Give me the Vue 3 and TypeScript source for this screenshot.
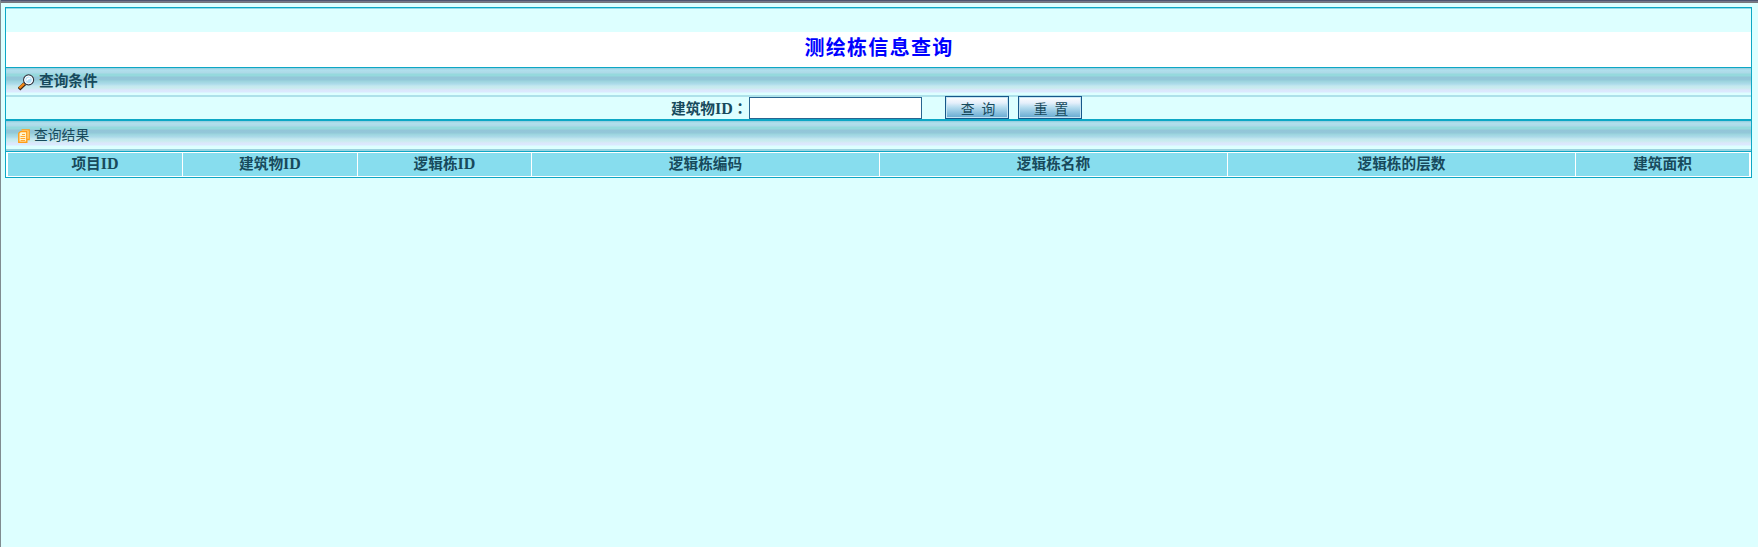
<script setup lang="ts">
import { ref } from 'vue'

interface Column {
  title: string
  suffix?: string
  width: number
}

const buildingId = ref('')
const columns: Column[] = [
  { title: '项目', suffix: 'ID', width: 174 },
  { title: '建筑物', suffix: 'ID', width: 174 },
  { title: '逻辑栋', suffix: 'ID', width: 173 },
  { title: '逻辑栋编码', width: 347 },
  { title: '逻辑栋名称', width: 347 },
  { title: '逻辑栋的层数', width: 347 },
  { title: '建筑面积', width: 173 },
]
const template = columns.map((c) => `${c.width}fr`).join(' ')

function reset(): void {
  buildingId.value = ''
}
</script>

<template>
  <main class="page">
    <div class="topbar"></div>
    <section class="panel">
      <div class="spacer"></div>
      <h1 class="title">测绘栋信息查询</h1>
      <div class="band search-band">
        <svg class="magnifier" width="17" height="17" viewBox="0 0 17 17">
          <path d="M1 15.2 6.8 9.7" stroke="#3b2418" stroke-width="3.8" />
          <path d="M1.3 14.2 6.2 9.6" stroke="#f58a16" stroke-width="2.3" />
          <circle cx="10.6" cy="5.9" r="5" fill="#e8f5ff" stroke="#35363f" stroke-width="1.2" />
          <circle cx="10.6" cy="5.9" r="3.8" fill="#b5e2fa" stroke="#fff" />
          <path d="M8.8 6.8c.2-2 1.5-2.7 3.6-2.5" fill="none" stroke="#fff" stroke-width="1.3" />
        </svg>
        <b>查询条件</b>
      </div>
      <form class="conditions" @submit.prevent>
        <label for="building">建筑物<span class="latin">ID</span><span class="colon">：</span></label>
        <input id="building" v-model="buildingId" type="text" />
        <button class="query" type="submit">查&nbsp; 询</button>
        <button type="button" @click="reset">重&nbsp; 置</button>
      </form>
      <div class="band result-band">
        <svg class="pages" width="12" height="14" viewBox="0 0 12 14">
          <path d="M3.5.8h7.7v9.7H9" fill="#ffe3a4" stroke="#ff9d16" stroke-width="1.3" />
          <path d="M.8 4.2 2.5 2.6h6.3v10.6H.8z" fill="#fff5cf" stroke="#ff9d16" stroke-width="1.4" />
          <path d="M4 5.5h3M2.5 7.5h4.7M2.5 9.5h4.7M2.5 11.5h4.7" stroke="#ffa62e" />
        </svg>
        <span>查询结果</span>
      </div>
      <div class="table-head" :style="{ gridTemplateColumns: template }">
        <div v-for="c in columns" :key="c.title" class="cell">
          {{ c.title }}<span v-if="c.suffix" class="latin">{{ c.suffix }}</span>
        </div>
      </div>
    </section>
  </main>
</template>

<style>
body {
  background: #dff;
}
</style>

<style scoped>
* {
  box-sizing: border-box;
}
.page {
  height: 547px;
  border-left: 1px solid #808c90;
  background: #dff;
  color: #174a5c;
  font: 14.67px/20px "Liberation Serif", "Noto Sans CJK SC", serif;
  overflow: hidden;
}
.topbar {
  height: 3px;
  margin-left: -1px;
  background: linear-gradient(#4d5570 0 1px, #77788a 1px 2px, #77777c 2px);
}
.panel {
  width: 1747px;
  height: 171px;
  margin: 4px 0 0 4px;
  border: 1px solid #0da7c5;
}
.spacer {
  height: 24px;
  border-top: 1px solid #91dce8;
}
.title {
  height: 35px;
  margin: 0;
  padding: 1px 0 0 1px;
  background: #fff;
  color: #00f;
  font-size: 20px;
  line-height: 31px;
  letter-spacing: 1.3px;
  text-align: center;
}
.band {
  display: flex;
  border-top: 1px solid #0da7c5;
  background: linear-gradient(#91cbdc 0, #b1e0ed 2px, #add9e7 5px, #95d9dd 6px, #95d9dd 8px, #93c5d8 9px, #93c8d9 12px, #9bd4dd 13px, #addbea 16px, #c4e8ef 18px, #c9ecee 20px, #dbe7fb 22px, #dce9ff 24px, #dff 25px);
}
.search-band {
  height: 30px;
  padding: 6px 0 0 12px;
  border-bottom: 2px solid #aee1ea;
}
.magnifier {
  margin-right: 4px;
}
.search-band b {
  line-height: 15px;
}
.conditions {
  display: flex;
  height: 22px;
  padding-left: 666px;
}
.conditions label {
  width: 77px;
  margin-left: -1px;
  margin-right: 1px;
  font-weight: bold;
  line-height: 24px;
  white-space: nowrap;
}
.latin {
  font-size: 16px;
  line-height: 1;
}
.colon {
  font-family: "Noto Sans CJK TC", sans-serif;
  line-height: 1;
}
input {
  width: 173px;
  height: 22px;
  border: 1px solid #286590;
  outline: 0;
  background: #fff;
  color: inherit;
  font: inherit;
}
button {
  width: 64px;
  height: 23px;
  margin: -1px 0 0 9px;
  padding: 4px 0 0 2px;
  border: 1px solid #16578a;
  box-shadow: inset 0 0 0 1px #c6e5f3;
  background: linear-gradient(#fff 0, #e4effb 6px, #b9def0 10px, #91c5e1 15px, #6caed4 20px);
  color: #174a5c;
  font: 13.8px/18px "Liberation Serif", "Noto Sans CJK SC", serif;
  white-space: nowrap;
}
button.query {
  margin-left: 23px;
}
.result-band {
  height: 32px;
  padding: 9px 0 0 12px;
  border-top: 2px solid #0da7c5;
  border-bottom: 2px solid #9bd2df;
}
.pages {
  margin: -1px 4px 0 0;
}
.result-band span {
  font-size: 13.8px;
  line-height: 12px;
}
.table-head {
  display: grid;
  height: 26px;
  padding: 1px 2px;
  gap: 1px;
  border-top: 1px solid #0da7c5;
  background: #fff;
}
.cell {
  background: #87ddee;
  text-align: center;
  font-weight: bold;
  line-height: 22px;
}
</style>
